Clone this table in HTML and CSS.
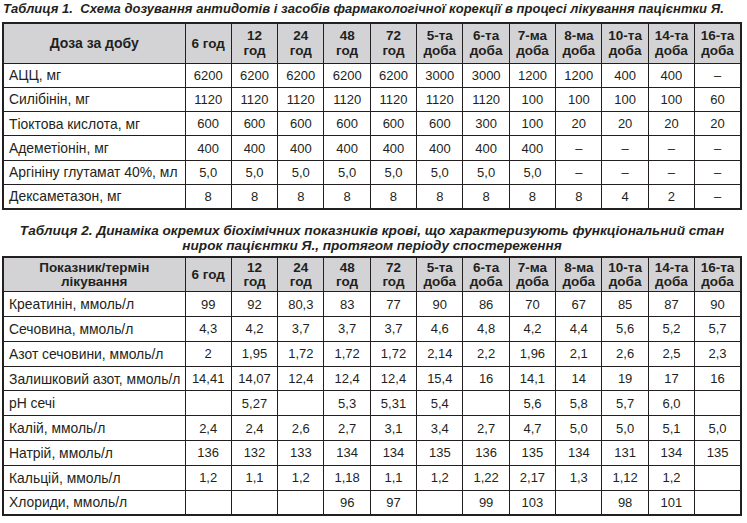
FILE: index.html
```html
<!DOCTYPE html>
<html lang="uk">
<head>
<meta charset="utf-8">
<title>Таблиці</title>
<link rel="stylesheet" href="styles.css">
</head>
<body>
<div class="page">
  <p class="caption caption-1">Таблиця 1.&nbsp; Схема дозування антидотів і засобів фармакологічної корекції в процесі лікування пацієнтки Я.</p>
  <table class="grid grid-1">
    <colgroup><col class="c-label"><col span="12"></colgroup>
    <thead>
      <tr><th class="h-label">Доза за добу</th><th>6 год</th><th>12<br>год</th><th>24<br>год</th><th>48<br>год</th><th>72<br>год</th><th>5-та<br>доба</th><th>6-та<br>доба</th><th>7-ма<br>доба</th><th>8-ма<br>доба</th><th>10-та<br>доба</th><th>14-та<br>доба</th><th>16-та<br>доба</th></tr>
    </thead>
    <tbody>
      <tr><td>АЦЦ, мг</td><td>6200</td><td>6200</td><td>6200</td><td>6200</td><td>6200</td><td>3000</td><td>3000</td><td>1200</td><td>1200</td><td>400</td><td>400</td><td>–</td></tr>
      <tr><td>Силібінін, мг</td><td>1120</td><td>1120</td><td>1120</td><td>1120</td><td>1120</td><td>1120</td><td>1120</td><td>100</td><td>100</td><td>100</td><td>100</td><td>60</td></tr>
      <tr><td>Тіоктова кислота, мг</td><td>600</td><td>600</td><td>600</td><td>600</td><td>600</td><td>600</td><td>300</td><td>100</td><td>20</td><td>20</td><td>20</td><td>20</td></tr>
      <tr><td>Адеметіонін, мг</td><td>400</td><td>400</td><td>400</td><td>400</td><td>400</td><td>400</td><td>400</td><td>400</td><td>–</td><td>–</td><td>–</td><td>–</td></tr>
      <tr><td>Аргініну глутамат 40%, мл</td><td>5,0</td><td>5,0</td><td>5,0</td><td>5,0</td><td>5,0</td><td>5,0</td><td>5,0</td><td>5,0</td><td>–</td><td>–</td><td>–</td><td>–</td></tr>
      <tr><td>Дексаметазон, мг</td><td>8</td><td>8</td><td>8</td><td>8</td><td>8</td><td>8</td><td>8</td><td>8</td><td>8</td><td>4</td><td>2</td><td>–</td></tr>
    </tbody>
  </table>

  <p class="caption caption-2">Таблиця 2. Динаміка окремих біохімічних показників крові, що характеризують функціональний стан<br>нирок пацієнтки Я., протягом періоду спостереження</p>
  <table class="grid grid-2">
    <colgroup><col class="c-label"><col span="12"></colgroup>
    <thead>
      <tr><th class="h-label">Показник/термін<br>лікування</th><th>6 год</th><th>12<br>год</th><th>24<br>год</th><th>48<br>год</th><th>72<br>год</th><th>5-та<br>доба</th><th>6-та<br>доба</th><th>7-ма<br>доба</th><th>8-ма<br>доба</th><th>10-та<br>доба</th><th>14-та<br>доба</th><th>16-та<br>доба</th></tr>
    </thead>
    <tbody>
      <tr><td>Креатинін, ммоль/л</td><td>99</td><td>92</td><td>80,3</td><td>83</td><td>77</td><td>90</td><td>86</td><td>70</td><td>67</td><td>85</td><td>87</td><td>90</td></tr>
      <tr><td>Сечовина, ммоль/л</td><td>4,3</td><td>4,2</td><td>3,7</td><td>3,7</td><td>3,7</td><td>4,6</td><td>4,8</td><td>4,2</td><td>4,4</td><td>5,6</td><td>5,2</td><td>5,7</td></tr>
      <tr><td>Азот сечовини, ммоль/л</td><td>2</td><td>1,95</td><td>1,72</td><td>1,72</td><td>1,72</td><td>2,14</td><td>2,2</td><td>1,96</td><td>2,1</td><td>2,6</td><td>2,5</td><td>2,3</td></tr>
      <tr><td>Залишковий азот, ммоль/л</td><td>14,41</td><td>14,07</td><td>12,4</td><td>12,4</td><td>12,4</td><td>15,4</td><td>16</td><td>14,1</td><td>14</td><td>19</td><td>17</td><td>16</td></tr>
      <tr><td>pH сечі</td><td></td><td>5,27</td><td></td><td>5,3</td><td>5,31</td><td>5,4</td><td></td><td>5,6</td><td>5,8</td><td>5,7</td><td>6,0</td><td></td></tr>
      <tr><td>Калій, ммоль/л</td><td>2,4</td><td>2,4</td><td>2,6</td><td>2,7</td><td>3,1</td><td>3,4</td><td>2,7</td><td>4,7</td><td>5,0</td><td>5,0</td><td>5,1</td><td>5,0</td></tr>
      <tr><td>Натрій, ммоль/л</td><td>136</td><td>132</td><td>133</td><td>134</td><td>134</td><td>135</td><td>136</td><td>135</td><td>134</td><td>131</td><td>134</td><td>135</td></tr>
      <tr><td>Кальцій, ммоль/л</td><td>1,2</td><td>1,1</td><td>1,2</td><td>1,18</td><td>1,1</td><td>1,2</td><td>1,22</td><td>2,17</td><td>1,3</td><td>1,12</td><td>1,2</td><td></td></tr>
      <tr><td>Хлориди, ммоль/л</td><td></td><td></td><td></td><td>96</td><td>97</td><td></td><td>99</td><td>103</td><td></td><td>98</td><td>101</td><td></td></tr>
    </tbody>
  </table>
</div>
</body>
</html>
```

FILE: styles.css
```css
html, body {
  margin: 0;
  padding: 0;
  background: #ffffff;
}

.page {
  padding: 0 5px 0 2px;
  width: 740px;
  font-family: "Liberation Sans", Arial, sans-serif;
  color: #231f20;
}

.caption {
  margin: 0;
  font-weight: bold;
  font-style: italic;
  font-size: 13px;
  line-height: 16px;
}

.caption-1 {
  padding: 1px 0 5px 1px;
  white-space: nowrap;
  letter-spacing: 0.04px;
}

.caption-2 {
  text-align: center;
  font-size: 13.6px;
  line-height: 15.5px;
  padding: 13px 0 2px 0;
}

.grid {
  width: 740px;
  border-collapse: collapse;
  table-layout: fixed;
  border: 2px solid #231f20;
  font-size: 13px;
}

.c-label {
  width: 182px;
}

.grid th,
.grid td {
  border: 1px solid #231f20;
  padding: 0;
  text-align: center;
  vertical-align: middle;
  white-space: nowrap;
  overflow: hidden;
}

.grid th {
  background: #d3d3d5;
  font-weight: bold;
  font-size: 13.5px;
}

.grid td:first-child {
  text-align: left;
  padding-left: 5px;
  font-size: 13.9px;
}

.grid-1 thead tr {
  height: 40px;
}

.grid-1 th {
  line-height: 15px;
}

.grid-1 .h-label {
  font-size: 14px;
}

.grid-1 tbody tr {
  height: 24.3px;
}

.grid-2 thead tr {
  height: 35px;
}

.grid-2 th {
  line-height: 13.5px;
}

.grid-2 tbody tr {
  height: 24.8px;
}
```
